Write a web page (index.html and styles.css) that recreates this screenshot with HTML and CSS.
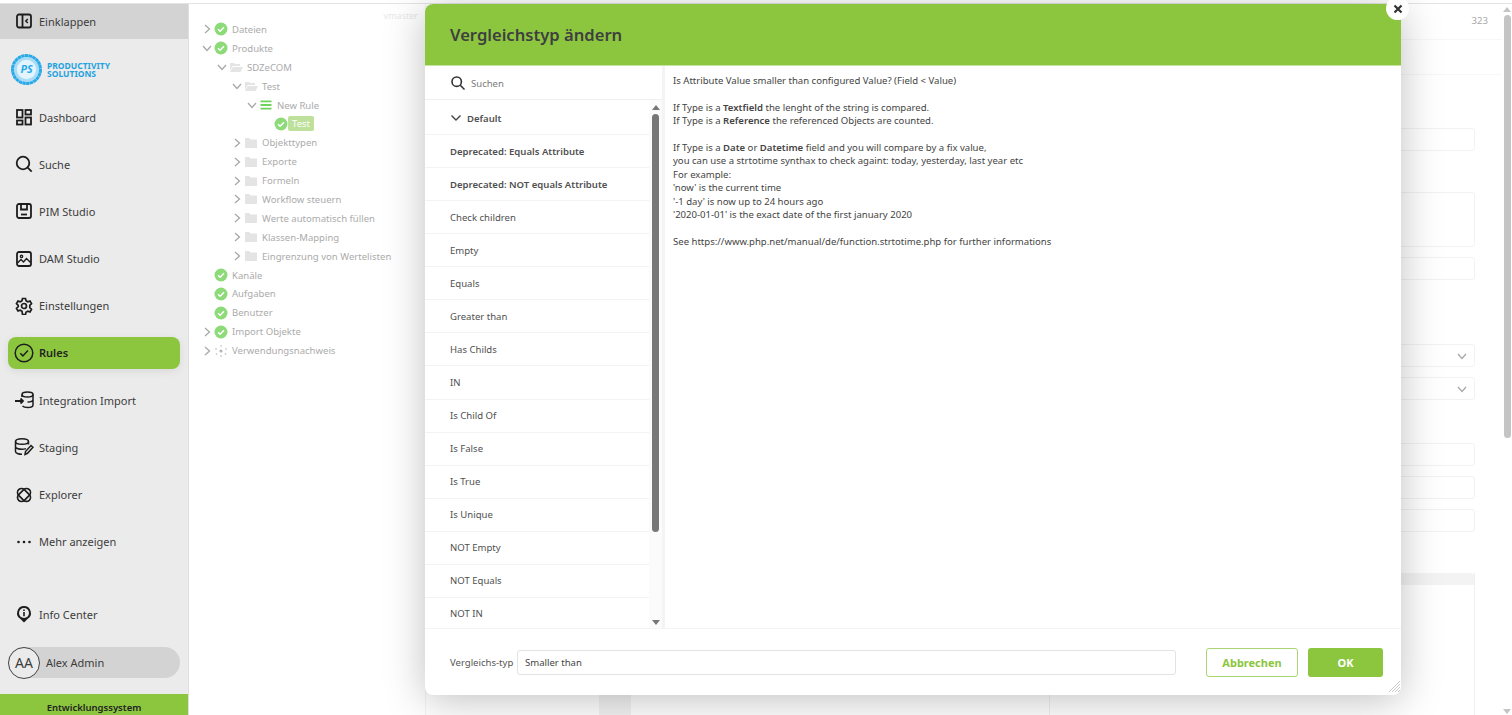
FILE: index.html
```html
<!DOCTYPE html>
<html>
<head>
  <meta charset="utf-8">
  <meta name="viewport" content="width=device-width, initial-scale=1">
  <title>Vergleichstyp ändern</title>
  <link rel="stylesheet" href="styles.css">
</head>
<body>
  <svg class="sprite" width="0" height="0">
    <symbol id="check" viewBox="0 0 14 14">
      <circle cx="7" cy="7" r="6.5" fill="#8ddb78"/>
      <path d="M4 7.2l2.1 2.1L10 5.2" fill="none" stroke="#fff" stroke-width="1.5"/>
    </symbol>
    <symbol id="open" viewBox="0 0 14 14">
      <path d="M1 3h4l1 1h5v2H3.500L1 11z M3.800 7H14l-2.500 5H1z" fill="#e4e4e4"/>
    </symbol>
    <symbol id="folder" viewBox="0 0 14 14">
      <path d="M1 2h4l1.500 1.500H13V12H1z" fill="#e4e4e4"/>
    </symbol>
    <symbol id="right" viewBox="0 0 14 14">
      <path d="M5 3l4.500 4L5 11" fill="none" stroke="#a8a8a8" stroke-width="1.300"/>
    </symbol>
    <symbol id="down" viewBox="0 0 14 14">
      <path d="M3 5l4 4.500L11 5" fill="none" stroke="#a8a8a8" stroke-width="1.300"/>
    </symbol>
  </svg>

  <div class="page">
    <aside class="sidebar">
      <a class="collapse">
        <svg class="icon" viewBox="0 0 18 18" fill="none" stroke="#1d1d1d" stroke-width="1.800"><rect x="2" y="2.500" width="14" height="13" rx="2"/><path d="M7.500 2.500v13"/><path d="M12.800 7l-2 2 2 2" stroke-width="1.500"/></svg>
        <span>Einklappen</span>
      </a>
      <div class="logo">
        <svg width="31" height="31" viewBox="0 0 32 32">
          <circle cx="16" cy="16" r="14.500" fill="#a9dcf6" stroke="#29a9e8" stroke-width="3" stroke-dasharray="3.500 .4"/>
          <circle cx="16" cy="16" r="10" fill="#e2f4fd"/>
          <text x="16" y="20" text-anchor="middle" class="logo-ps">PS</text>
        </svg>
        <div class="logo-text">PRODUCTIVITY<br>SOLUTIONS</div>
      </div>
      <nav class="nav">
        <a class="nav-item">
          <svg class="icon" viewBox="0 0 18 18" fill="none" stroke="#1d1d1d" stroke-width="1.800"><rect x="2" y="2" width="5.500" height="7.500"/><rect x="10.500" y="2" width="5.500" height="4.500"/><rect x="2" y="12.500" width="5.500" height="4"/><rect x="10.500" y="9.500" width="5.500" height="7"/></svg>
          <span>Dashboard</span>
        </a>
        <a class="nav-item">
          <svg class="icon" viewBox="0 0 18 18" fill="none" stroke="#1d1d1d" stroke-width="1.800"><circle cx="8" cy="8" r="6.300"/><path d="M12.700 12.700l4 4"/></svg>
          <span>Suche</span>
        </a>
        <a class="nav-item">
          <svg class="icon" viewBox="0 0 18 18" fill="none" stroke="#1d1d1d" stroke-width="1.800"><rect x="2" y="2" width="14" height="14" rx="2"/><path d="M6 2v5.500h6V2"/><path d="M6 12.500h6"/></svg>
          <span>PIM Studio</span>
        </a>
        <a class="nav-item">
          <svg class="icon" viewBox="0 0 18 18" fill="none" stroke="#1d1d1d" stroke-width="1.800"><rect x="2" y="2" width="14" height="14" rx="2"/><circle cx="6.500" cy="6.300" r="1.200" stroke-width="1.300"/><path d="M2.500 13l3.500-3.500 2.500 2.500 3-3.500 4 4" stroke-width="1.400"/></svg>
          <span>DAM Studio</span>
        </a>
        <a class="nav-item">
          <svg class="icon" viewBox="0 0 18 18" fill="none" stroke="#1d1d1d" stroke-width="1.700"><circle cx="9" cy="9" r="2.500"/><path d="M7.500 1.500h3l.5 2.300 1.700 1 2.300-.7 1.500 2.600-1.700 1.600v2.400l1.700 1.600-1.500 2.600-2.300-.7-1.700 1-.5 2.300h-3L7 14.200l-1.700-1-2.300.7-1.500-2.600 1.700-1.600V8.300L1.500 6.700 3 4.100l2.300.7 1.700-1z"/></svg>
          <span>Einstellungen</span>
        </a>
        <a class="nav-item active">
          <svg class="icon icon-lg" viewBox="0 0 20 20" fill="none" stroke="#1d1d1d" stroke-width="1.500"><circle cx="10" cy="10" r="8.800"/><path d="M6.300 10.300l2.600 2.600 5-5.300"/></svg>
          <span>Rules</span>
        </a>
        <a class="nav-item">
          <svg class="icon icon-lg" viewBox="0 0 20 20" fill="none" stroke="#1d1d1d" stroke-width="1.500"><path d="M1 11h8M6.500 8.500L9 11l-2.500 2.500" stroke-width="1.800"/><ellipse cx="13.500" cy="4.500" rx="5.500" ry="2.500"/><path d="M8 4.500v2.500M19 4.500V15c0 1.500-2.500 2.500-5.500 2.500-2 0-4-.5-5-1.500M19 9.500c0 1.500-2.500 2.500-5.500 2.500"/></svg>
          <span>Integration Import</span>
        </a>
        <a class="nav-item">
          <svg class="icon icon-lg" viewBox="0 0 20 20" fill="none" stroke="#1d1d1d" stroke-width="1.500"><ellipse cx="8" cy="4.500" rx="6.500" ry="2.800"/><path d="M1.500 4.500v10c0 1.500 3 2.800 6.500 2.800M1.500 9.500c0 1.500 3 2.800 6.500 2.800 1.500 0 3-.3 4-.7M14.500 4.500v3"/><path d="M11 17.500l.5-3 5.500-6 2 1.800-5.500 6z"/></svg>
          <span>Staging</span>
        </a>
        <a class="nav-item">
          <svg class="icon" viewBox="0 0 18 18" fill="none" stroke="#1d1d1d" stroke-width="1.700"><rect x="5" y="1.500" width="8" height="15" rx="4" transform="rotate(45 9 9)"/><rect x="5" y="1.500" width="8" height="15" rx="4" transform="rotate(-45 9 9)"/></svg>
          <span>Explorer</span>
        </a>
        <a class="nav-item">
          <svg class="icon" viewBox="0 0 18 18" fill="#1d1d1d"><circle cx="3.500" cy="9" r="1.300"/><circle cx="9" cy="9" r="1.300"/><circle cx="14.500" cy="9" r="1.300"/></svg>
          <span>Mehr anzeigen</span>
        </a>
      </nav>
      <a class="info-item">
        <svg class="icon" viewBox="0 0 18 18"><path d="M9 1a7 7 0 0 1 3.500 13L9 17.500 5.500 14A7 7 0 0 1 9 1z" fill="#1d1d1d"/><circle cx="9" cy="8" r="5" fill="#ebebeb"/><path d="M8.200 7h1.600v4.200H8.200zM8.200 4.500h1.600V6H8.200z" fill="#1d1d1d"/></svg>
        <span>Info Center</span>
      </a>
      <div class="user">
        <div class="avatar">AA</div>
        <span>Alex Admin</span>
      </div>
      <div class="env">Entwicklungssystem</div>
    </aside>

    <section class="tree">
      <div class="branch">vmaster</div>
      <div class="row lv0"><svg class="box"><use href="#right"/></svg><svg class="box"><use href="#check"/></svg><span>Dateien</span></div>
      <div class="row lv0"><svg class="box"><use href="#down"/></svg><svg class="box"><use href="#check"/></svg><span>Produkte</span></div>
      <div class="row lv1"><svg class="box"><use href="#down"/></svg><svg class="box"><use href="#open"/></svg><span>SDZeCOM</span></div>
      <div class="row lv2"><svg class="box"><use href="#down"/></svg><svg class="box"><use href="#open"/></svg><span>Test</span></div>
      <div class="row lv3"><svg class="box"><use href="#down"/></svg><svg class="box" viewBox="0 0 14 14"><path d="M1.500 2.500h11v1.800h-11zM1.500 6.100h11v1.800h-11zM1.500 9.700h11v1.800h-11z" fill="#6fd25c"/></svg><span>New Rule</span></div>
      <div class="row lv4"><svg class="box"><use href="#check"/></svg><span class="picked">Test</span></div>
      <div class="row lv2"><svg class="box"><use href="#right"/></svg><svg class="box"><use href="#folder"/></svg><span>Objekttypen</span></div>
      <div class="row lv2"><svg class="box"><use href="#right"/></svg><svg class="box"><use href="#folder"/></svg><span>Exporte</span></div>
      <div class="row lv2"><svg class="box"><use href="#right"/></svg><svg class="box"><use href="#folder"/></svg><span>Formeln</span></div>
      <div class="row lv2"><svg class="box"><use href="#right"/></svg><svg class="box"><use href="#folder"/></svg><span>Workflow steuern</span></div>
      <div class="row lv2"><svg class="box"><use href="#right"/></svg><svg class="box"><use href="#folder"/></svg><span>Werte automatisch füllen</span></div>
      <div class="row lv2"><svg class="box"><use href="#right"/></svg><svg class="box"><use href="#folder"/></svg><span>Klassen-Mapping</span></div>
      <div class="row lv2"><svg class="box"><use href="#right"/></svg><svg class="box"><use href="#folder"/></svg><span>Eingrenzung von Wertelisten</span></div>
      <div class="row lv0"><i class="box"></i><svg class="box"><use href="#check"/></svg><span>Kanäle</span></div>
      <div class="row lv0"><i class="box"></i><svg class="box"><use href="#check"/></svg><span>Aufgaben</span></div>
      <div class="row lv0"><i class="box"></i><svg class="box"><use href="#check"/></svg><span>Benutzer</span></div>
      <div class="row lv0"><svg class="box"><use href="#right"/></svg><svg class="box"><use href="#check"/></svg><span>Import Objekte</span></div>
      <div class="row lv0"><svg class="box"><use href="#right"/></svg><svg class="box" viewBox="0 0 14 14" fill="#b5b5b5"><circle cx="7" cy="7" r="1.600"/><circle cx="7" cy="2" r=".8"/><circle cx="7" cy="12" r=".8"/><circle cx="2" cy="5" r=".8"/><circle cx="12" cy="5" r=".8"/><circle cx="2.500" cy="10" r=".8"/><circle cx="11.500" cy="10" r=".8"/></svg><span>Verwendungsnachweis</span></div>
    </section>

    <main class="main">
      <div class="main-head"><span>323</span></div>
      <div class="main-sub"></div>
      <div class="form">
        <div class="field"></div>
        <div class="field area"></div>
        <div class="field near"></div>
        <div class="field select group"><svg class="box"><use href="#down"/></svg></div>
        <div class="field select near"><svg class="box"><use href="#down"/></svg></div>
        <div class="field group-small"></div>
        <div class="field near"></div>
        <div class="field near"></div>
        <div class="bottom">
          <div class="gutter"></div>
          <div class="pane"></div>
          <div class="pane titled"><div class="pane-head"></div></div>
        </div>
      </div>
    </main>

    <div class="scrollbar">
      <i class="arrow-up"></i>
      <div class="scroll-thumb"></div>
      <i class="arrow-down"></i>
    </div>
  </div>

  <div class="modal">
    <button class="close"><svg width="10" height="10" viewBox="0 0 10 10"><path d="M1.500 1.500l7 7M8.500 1.500l-7 7" stroke="#333" stroke-width="2.200"/></svg></button>
    <header class="modal-head">Vergleichstyp ändern</header>
    <div class="modal-body">
      <div class="picker">
        <div class="search">
          <svg width="16" height="16" viewBox="0 0 16 16" fill="none" stroke="#333" stroke-width="1.600"><circle cx="6.700" cy="6.700" r="4.700"/><path d="M10.300 10.300l4.200 4.200"/></svg>
          <span>Suchen</span>
        </div>
        <div class="list-wrap">
          <ul class="list">
            <li class="group-row"><svg width="12" height="12" viewBox="0 0 12 12" fill="none" stroke="#444" stroke-width="1.400"><path d="M1.500 3.500L6 8l4.500-4.500"/></svg>Default</li>
            <li class="strong">Deprecated: Equals Attribute</li>
            <li class="strong">Deprecated: NOT equals Attribute</li>
            <li>Check children</li>
            <li>Empty</li>
            <li>Equals</li>
            <li>Greater than</li>
            <li>Has Childs</li>
            <li>IN</li>
            <li>Is Child Of</li>
            <li>Is False</li>
            <li>Is True</li>
            <li>Is Unique</li>
            <li>NOT Empty</li>
            <li>NOT Equals</li>
            <li>NOT IN</li>
          </ul>
          <div class="list-scroll">
            <i class="tri-up"></i>
            <div class="list-thumb"></div>
            <i class="tri-down"></i>
          </div>
        </div>
      </div>
      <div class="desc">
        <p>Is Attribute Value smaller than configured Value? (Field &lt; Value)</p>
        <p>If Type is a <b>Textfield</b> the lenght of the string is compared.<br>If Type is a <b>Reference</b> the referenced Objects are counted.</p>
        <p>If Type is a <b>Date</b> or <b>Datetime</b> field and you will compare by a fix value,<br>you can use a strtotime synthax to check againt: today, yesterday, last year etc<br>For example:<br>'now' is the current time<br>'-1 day' is now up to 24 hours ago<br>'2020-01-01' is the exact date of the first january 2020</p>
        <p>See https://www.php.net/manual/de/function.strtotime.php for further informations</p>
      </div>
    </div>
    <footer class="modal-foot">
      <label class="foot-label">Vergleichs-typ</label>
      <div class="foot-input">Smaller than</div>
      <button class="btn-cancel">Abbrechen</button>
      <button class="btn-ok">OK</button>
    </footer>
    <svg class="grip" width="12" height="12" viewBox="0 0 12 12" stroke="#bbb" stroke-width=".8"><path d="M1 12L12 1M4 12l8-8M7 12l5-5M10 12l2-2"/></svg>
  </div>
</body>
</html>
```

FILE: styles.css
```css
* {
  box-sizing: border-box;
}

html, body {
  margin: 0;
  height: 100%;
  overflow: hidden;
}

body {
  font-family: "Noto Sans", Arial, sans-serif;
  color: #3c3c3c;
  background-color: #fff;
}

.sprite {
  display: block;
  height: 0;
}

.page {
  display: flex;
  height: 715px;
  padding-top: 4px;
  background: linear-gradient(#e4e4e4, #e4e4e4) 0 3px / 100% 1px no-repeat #fff;
}

/* sidebar */
.sidebar {
  width: 189px;
  flex-shrink: 0;
  display: flex;
  flex-direction: column;
  background-color: #ebebeb;
  border-right: 1px solid #dedede;
  font-size: 11px;
}

.collapse {
  height: 34.500px;
  flex-shrink: 0;
  display: flex;
  align-items: center;
  gap: 6px;
  padding-left: 15px;
  background-color: #d3d3d3;
}

.icon {
  width: 18px;
  height: 18px;
  flex-shrink: 0;
}

.icon-lg {
  width: 20px;
  height: 20px;
  margin: 0 -1px;
}

.logo {
  height: 62.500px;
  flex-shrink: 0;
  display: flex;
  align-items: center;
  gap: 5px;
  padding: 0 0 0 11px;
}

.logo-ps {
  font-size: 11px;
  font-weight: 700;
  font-style: italic;
  fill: #29a9e8;
}

.logo-text {
  font-size: 8.500px;
  line-height: 8px;
  font-weight: 700;
  color: #1fa3e0;
}

.nav {
  display: flex;
  flex-direction: column;
  gap: 15.200px;
}

.nav-item {
  height: 32px;
  display: flex;
  align-items: center;
  gap: 6px;
  margin: 0 8px;
  padding-left: 7px;
  border-radius: 8px;
}

.active {
  background-color: #8cc63f;
  box-shadow: 0 2px 8px rgba(0, 0, 0, 0.08);
  color: #222;
  font-weight: 600;
}

.info-item {
  display: flex;
  align-items: center;
  gap: 6px;
  margin-top: auto;
  padding-left: 15px;
  height: 32px;
}

.user {
  height: 31px;
  margin: 17px 8px 0;
  padding-bottom: 1px;
  display: flex;
  align-items: center;
  gap: 6px;
  background-color: #d3d3d3;
  border-radius: 16px;
}

.avatar {
  width: 32px;
  height: 32px;
  flex-shrink: 0;
  margin-bottom: -1px;
  border: 1px solid #444;
  border-radius: 50%;
  background-color: #ebebeb;
  display: flex;
  align-items: center;
  justify-content: center;
  font-size: 14px;
}

.env {
  height: 21px;
  margin-top: 16px;
  background-color: #8cc63f;
  color: #222;
  font-size: 9.500px;
  font-weight: 600;
  text-align: center;
  line-height: 28px;
}

/* tree behind the dialog */
.tree {
  width: 236px;
  flex-shrink: 0;
  position: relative;
  padding: 16px 0 0 11px;
  font-size: 9.550px;
  color: #ababab;
}

.branch {
  position: absolute;
  top: 5px;
  right: 7px;
  font-size: 9px;
  color: #e8e8e8;
}

.row {
  height: 18.900px;
  display: flex;
  align-items: center;
}

.row span {
  margin-left: 4px;
}

.box {
  width: 14px;
  height: 14px;
  display: block;
  flex-shrink: 0;
}

.lv1 { padding-left: 15px; }
.lv2 { padding-left: 30px; }
.lv3 { padding-left: 45px; }
.lv4 { padding-left: 74px; }

.row .picked {
  margin-left: 0;
  padding: 0 4px;
  height: 15px;
  line-height: 15px;
  background-color: #bde09a;
  border-radius: 2px;
  color: #fff;
}

/* form behind the dialog */
.main {
  flex: 1;
  display: flex;
  flex-direction: column;
  min-width: 0;
  border-left: 1px solid #f3f3f3;
}

.main-head {
  height: 36px;
  border-bottom: 1px solid #f7f7f7;
  padding: 10px 14px 0 0;
  text-align: right;
  font-size: 9.550px;
  color: #a8a8a8;
}

.main-sub {
  height: 35px;
  border-bottom: 1px solid #f7f7f7;
}

.form {
  flex: 1;
  padding: 53px 27px 0 0;
  display: flex;
  flex-direction: column;
}

.field {
  height: 23px;
  flex-shrink: 0;
  border: 1px solid #f2f2f2;
  border-radius: 3px;
}

.area {
  height: 55px;
  margin-top: 41px;
}

.near {
  margin-top: 10px;
}

.group {
  margin-top: 64px;
}

.group-small {
  margin-top: 43px;
}

.select {
  display: flex;
  justify-content: flex-end;
  align-items: center;
  padding-right: 5px;
}

.bottom {
  flex: 1;
  display: flex;
  margin-top: 41px;
}

.gutter {
  width: 32px;
  margin-left: 173px;
  background-color: #f3f3f3;
}

.pane {
  flex: 1;
  border-right: 1px solid #f0f0f0;
}

.titled {
  flex: none;
  width: 425px;
}

.pane-head {
  height: 12px;
  background-color: #f3f3f3;
  border-radius: 3px 3px 0 0;
}

.scrollbar {
  width: 10px;
  flex-shrink: 0;
  display: flex;
  flex-direction: column;
  align-items: center;
  padding-top: 3px;
}

.arrow-up {
  border: 4px solid transparent;
  border-top: 0;
  border-bottom: 5px solid #c4c4c4;
}

.scroll-thumb {
  width: 7px;
  height: 423px;
  margin-top: 3px;
  border-radius: 4px;
  background-color: #c4c4c4;
}

.arrow-down {
  margin-top: auto;
  margin-bottom: 1px;
  border: 4px solid transparent;
  border-bottom: 0;
  border-top: 5px solid #c4c4c4;
}

/* dialog */
.modal {
  position: absolute;
  left: 425px;
  top: 4px;
  width: 976px;
  height: 691px;
  display: flex;
  flex-direction: column;
  background-color: #fff;
  border-radius: 8px;
  box-shadow: 0 5px 40px rgba(0, 0, 0, 0.25);
}

.close {
  position: absolute;
  top: -7px;
  right: -8px;
  width: 23px;
  height: 23px;
  padding: 0;
  border: none;
  border-radius: 50%;
  background-color: #fff;
  display: flex;
  align-items: center;
  justify-content: center;
}

.modal-head {
  height: 62px;
  flex-shrink: 0;
  padding-left: 25px;
  background-color: #8cc63f;
  border-radius: 8px 0 0 0;
  border-bottom: 1px solid #c7e3a0;
  font-size: 16.600px;
  font-weight: 600;
  line-height: 62px;
  color: #3f3f3f;
}

.modal-body {
  flex: 1;
  display: flex;
  min-height: 0;
}

.picker {
  width: 237px;
  flex-shrink: 0;
  display: flex;
  flex-direction: column;
}

.search {
  height: 34px;
  flex-shrink: 0;
  display: flex;
  align-items: center;
  gap: 5px;
  padding: 1px 0 0 25px;
  border-bottom: 1px solid #efefef;
  font-size: 9.550px;
  color: #7c7c7c;
}

.list-wrap {
  flex: 1;
  min-height: 0;
  display: flex;
}

.list {
  flex: 1;
  margin: 0;
  padding: 0;
  list-style: none;
  overflow: hidden;
  font-size: 9.550px;
  color: #505050;
}

.list li {
  height: 33.070px;
  padding-left: 25px;
  display: flex;
  align-items: center;
  border-bottom: 1px solid #f3f3f3;
}

.list .group-row {
  height: 35px;
  padding-top: 2px;
}

.list .strong,
.list .group-row {
  font-weight: 600;
}

.group-row svg {
  margin-right: 5px;
}

.list-scroll {
  width: 13px;
  flex-shrink: 0;
  display: flex;
  flex-direction: column;
  align-items: center;
  padding-top: 5px;
  background-color: #fbfbfb;
}

.tri-up {
  border: 4px solid transparent;
  border-top: 0;
  border-bottom: 5px solid #777;
}

.list-thumb {
  width: 7px;
  height: 418px;
  margin-top: 4px;
  border-radius: 4px;
  background-color: #777;
}

.tri-down {
  margin-top: auto;
  margin-bottom: 3px;
  border: 4px solid transparent;
  border-bottom: 0;
  border-top: 5px solid #777;
}

.desc {
  flex: 1;
  padding: 8px 8px 0;
  border-left: 3px solid #f4f4f4;
  font-size: 9.550px;
  line-height: 13.400px;
  color: #444;
}

.desc p {
  margin: 0 0 13.400px;
}

.desc b {
  font-weight: 600;
}

.modal-foot {
  height: 67px;
  flex-shrink: 0;
  display: flex;
  align-items: center;
  padding: 0 18px 0 25px;
  border-top: 1px solid #f4f4f4;
  font-size: 9.550px;
}

.foot-label {
  width: 67px;
  flex-shrink: 0;
  color: #555;
}

.foot-input {
  width: 659px;
  height: 25px;
  padding-left: 7px;
  line-height: 23px;
  border: 1px solid #e3e3e3;
  border-radius: 3px;
  color: #444;
}

.btn-cancel,
.btn-ok {
  height: 29px;
  border-radius: 3px;
  font-family: inherit;
  font-size: 11px;
  font-weight: 700;
}

.btn-cancel {
  width: 92px;
  margin-left: 30px;
  background-color: #fff;
  border: 1px solid #a9d673;
  color: #8cc63f;
}

.btn-ok {
  width: 75px;
  margin-left: 10px;
  background-color: #8cc63f;
  border: none;
  color: #fff;
}

.grip {
  position: absolute;
  right: 1px;
  bottom: 3px;
}
```
